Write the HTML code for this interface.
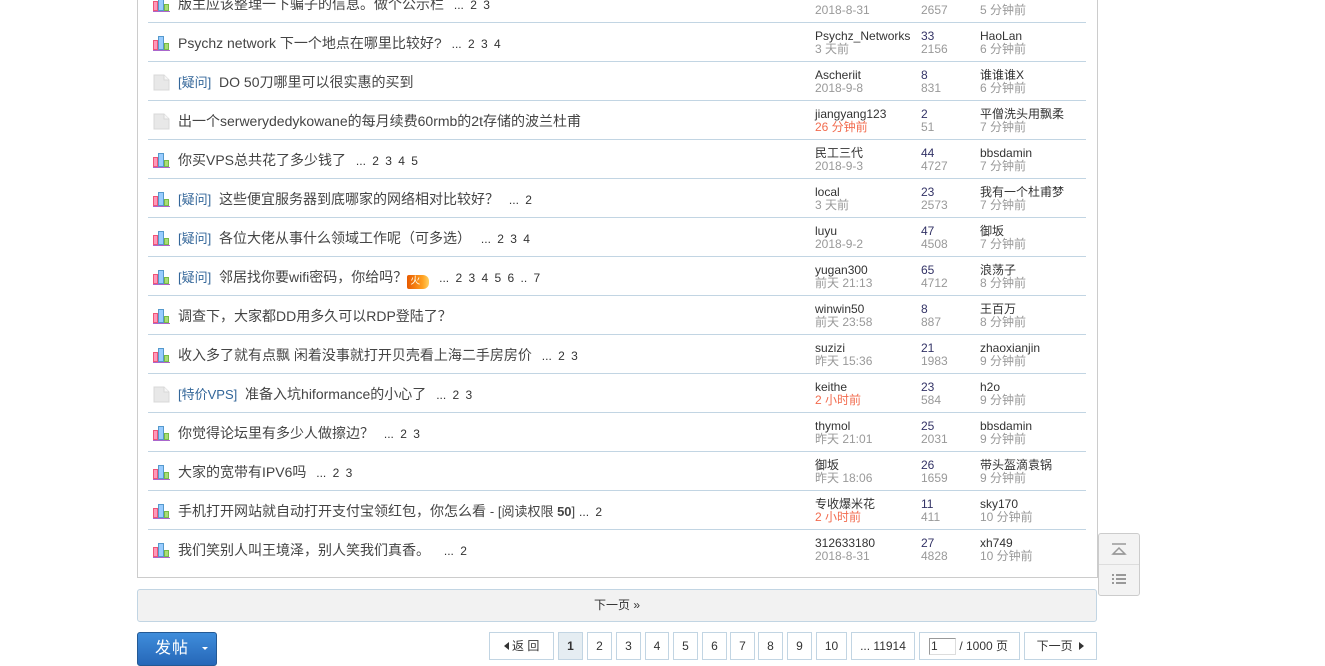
<!DOCTYPE html>
<html><head><meta charset="utf-8"><style>
*{margin:0;padding:0;box-sizing:border-box}
body{width:1325px;height:663px;background:#fff;position:relative;overflow:hidden;font-family:"Liberation Sans","Noto Sans CJK SC",sans-serif;color:#333;font-size:12px}
.box{position:absolute;left:137px;top:-2px;width:961px;height:580px;border:1px solid #ccc;border-top:none}
.row{position:absolute;left:148px;width:938px;height:39px;border-bottom:1px solid #c2d5e3}
.ic{position:absolute;left:5px;top:13px;width:17px;height:15px}
.t{position:absolute;left:30px;top:11px;font-size:14px;white-space:nowrap;line-height:18px;color:#444}
.t .tag{color:#369;font-size:13px}
.t .pg{font-size:12px;color:#333;margin-left:6px;word-spacing:3px}
.a{position:absolute;left:667px;top:7px;line-height:13px;white-space:nowrap}
.n{position:absolute;left:773px;top:7px;line-height:13px;color:#336}
.l{position:absolute;left:832px;top:7px;line-height:13px;white-space:nowrap}
.g{color:#999}.r{color:#f26c4f}
.fire{display:inline-block;width:22px;height:14px;background:linear-gradient(90deg,#e85a00,#ffa020 70%,#ffd060);border-radius:2px 6px 6px 2px;color:#ffe;font-size:10px;line-height:14px;vertical-align:-2px;padding-left:3px}
.next{position:absolute;left:137px;top:589px;width:960px;height:33px;background:#f2f2f2;border:1px solid #c2d5e3;border-radius:3px;text-align:center;line-height:31px;font-size:12px}
.post{position:absolute;left:137px;top:632px;width:80px;height:34px;background:linear-gradient(#3f8ddb,#2667b8);border:1px solid #235994;border-radius:3px;color:#fff;font-size:16px;line-height:31px;padding-left:17px;letter-spacing:1px}
.pgb{position:absolute;top:632px;height:28px;border:1px solid #c2d5e3;background:#fff;line-height:26px;text-align:center;font-size:12px;color:#333}
.side{position:absolute;left:1098px;top:533px;width:42px;height:63px;border:1px solid #ccc;border-radius:3px;background:#f3f3f3}
.tri{display:inline-block;width:0;height:0;border-top:4px solid transparent;border-bottom:4px solid transparent;vertical-align:0}
</style></head><body>
<div class="box"></div>

<div class="row" style="top:-16px"><svg class="ic" viewBox="0 0 17 15"><rect x="0.5" y="4.5" width="4" height="9" fill="#f9b" stroke="#e57"/><rect x="5.5" y="0.5" width="5" height="13" fill="#9cf" stroke="#59c"/><rect x="11.5" y="7.5" width="4" height="6" fill="#ad7" stroke="#7b4"/><rect x="0" y="14" width="17" height="1" fill="#a6c"/></svg><div class="t">版主应该整理一下骗子的信息。做个公示栏 <span class="pg">... 2 3</span></div><div class="a">&nbsp;<br><span class="g">2018-8-31</span></div><div class="n">&nbsp;<br><span class="g">2657</span></div><div class="l">&nbsp;<br><span class="g">5 分钟前</span></div></div>

<div class="row" style="top:23px"><svg class="ic" viewBox="0 0 17 15"><rect x="0.5" y="4.5" width="4" height="9" fill="#f9b" stroke="#e57"/><rect x="5.5" y="0.5" width="5" height="13" fill="#9cf" stroke="#59c"/><rect x="11.5" y="7.5" width="4" height="6" fill="#ad7" stroke="#7b4"/><rect x="0" y="14" width="17" height="1" fill="#a6c"/></svg><div class="t">Psychz network 下一个地点在哪里比较好? <span class="pg">... 2 3 4</span></div><div class="a">Psychz_Networks<br><span class="g">3 天前</span></div><div class="n">33<br><span class="g">2156</span></div><div class="l">HaoLan<br><span class="g">6 分钟前</span></div></div>

<div class="row" style="top:62px"><svg class="ic" viewBox="0 0 17 17" style="height:17px;top:12px"><path d="M1 1h10l5 5v10H1z" fill="#e8e8e8" stroke="#d8d8d8"/><path d="M11 1v5h5" fill="#f6f6f6" stroke="#d8d8d8"/></svg><div class="t"><span class="tag">[疑问]</span>&nbsp; DO 50刀哪里可以很实惠的买到</div><div class="a">Ascheriit<br><span class="g">2018-9-8</span></div><div class="n">8<br><span class="g">831</span></div><div class="l">谁谁谁X<br><span class="g">6 分钟前</span></div></div>

<div class="row" style="top:101px"><svg class="ic" viewBox="0 0 17 17" style="height:17px;top:12px"><path d="M1 1h10l5 5v10H1z" fill="#e8e8e8" stroke="#d8d8d8"/><path d="M11 1v5h5" fill="#f6f6f6" stroke="#d8d8d8"/></svg><div class="t">出一个serwerydedykowane的每月续费60rmb的2t存储的波兰杜甫</div><div class="a">jiangyang123<br><span class="r">26 分钟前</span></div><div class="n">2<br><span class="g">51</span></div><div class="l">平僧洗头用飘柔<br><span class="g">7 分钟前</span></div></div>

<div class="row" style="top:140px"><svg class="ic" viewBox="0 0 17 15"><rect x="0.5" y="4.5" width="4" height="9" fill="#f9b" stroke="#e57"/><rect x="5.5" y="0.5" width="5" height="13" fill="#9cf" stroke="#59c"/><rect x="11.5" y="7.5" width="4" height="6" fill="#ad7" stroke="#7b4"/><rect x="0" y="14" width="17" height="1" fill="#a6c"/></svg><div class="t">你买VPS总共花了多少钱了 <span class="pg">... 2 3 4 5</span></div><div class="a">民工三代<br><span class="g">2018-9-3</span></div><div class="n">44<br><span class="g">4727</span></div><div class="l">bbsdamin<br><span class="g">7 分钟前</span></div></div>

<div class="row" style="top:179px"><svg class="ic" viewBox="0 0 17 15"><rect x="0.5" y="4.5" width="4" height="9" fill="#f9b" stroke="#e57"/><rect x="5.5" y="0.5" width="5" height="13" fill="#9cf" stroke="#59c"/><rect x="11.5" y="7.5" width="4" height="6" fill="#ad7" stroke="#7b4"/><rect x="0" y="14" width="17" height="1" fill="#a6c"/></svg><div class="t"><span class="tag">[疑问]</span>&nbsp; 这些便宜服务器到底哪家的网络相对比较好？ <span class="pg">... 2</span></div><div class="a">local<br><span class="g">3 天前</span></div><div class="n">23<br><span class="g">2573</span></div><div class="l">我有一个杜甫梦<br><span class="g">7 分钟前</span></div></div>

<div class="row" style="top:218px"><svg class="ic" viewBox="0 0 17 15"><rect x="0.5" y="4.5" width="4" height="9" fill="#f9b" stroke="#e57"/><rect x="5.5" y="0.5" width="5" height="13" fill="#9cf" stroke="#59c"/><rect x="11.5" y="7.5" width="4" height="6" fill="#ad7" stroke="#7b4"/><rect x="0" y="14" width="17" height="1" fill="#a6c"/></svg><div class="t"><span class="tag">[疑问]</span>&nbsp; 各位大佬从事什么领域工作呢（可多选） <span class="pg">... 2 3 4</span></div><div class="a">luyu<br><span class="g">2018-9-2</span></div><div class="n">47<br><span class="g">4508</span></div><div class="l">御坂<br><span class="g">7 分钟前</span></div></div>

<div class="row" style="top:257px"><svg class="ic" viewBox="0 0 17 15"><rect x="0.5" y="4.5" width="4" height="9" fill="#f9b" stroke="#e57"/><rect x="5.5" y="0.5" width="5" height="13" fill="#9cf" stroke="#59c"/><rect x="11.5" y="7.5" width="4" height="6" fill="#ad7" stroke="#7b4"/><rect x="0" y="14" width="17" height="1" fill="#a6c"/></svg><div class="t"><span class="tag">[疑问]</span>&nbsp; 邻居找你要wifi密码，你给吗？<span class="fire">火</span> <span class="pg">... 2 3 4 5 6 .. 7</span></div><div class="a">yugan300<br><span class="g">前天 21:13</span></div><div class="n">65<br><span class="g">4712</span></div><div class="l">浪荡子<br><span class="g">8 分钟前</span></div></div>

<div class="row" style="top:296px"><svg class="ic" viewBox="0 0 17 15"><rect x="0.5" y="4.5" width="4" height="9" fill="#f9b" stroke="#e57"/><rect x="5.5" y="0.5" width="5" height="13" fill="#9cf" stroke="#59c"/><rect x="11.5" y="7.5" width="4" height="6" fill="#ad7" stroke="#7b4"/><rect x="0" y="14" width="17" height="1" fill="#a6c"/></svg><div class="t">调查下，大家都DD用多久可以RDP登陆了？</div><div class="a">winwin50<br><span class="g">前天 23:58</span></div><div class="n">8<br><span class="g">887</span></div><div class="l">王百万<br><span class="g">8 分钟前</span></div></div>

<div class="row" style="top:335px"><svg class="ic" viewBox="0 0 17 15"><rect x="0.5" y="4.5" width="4" height="9" fill="#f9b" stroke="#e57"/><rect x="5.5" y="0.5" width="5" height="13" fill="#9cf" stroke="#59c"/><rect x="11.5" y="7.5" width="4" height="6" fill="#ad7" stroke="#7b4"/><rect x="0" y="14" width="17" height="1" fill="#a6c"/></svg><div class="t">收入多了就有点飘 闲着没事就打开贝壳看上海二手房房价 <span class="pg">... 2 3</span></div><div class="a">suzizi<br><span class="g">昨天 15:36</span></div><div class="n">21<br><span class="g">1983</span></div><div class="l">zhaoxianjin<br><span class="g">9 分钟前</span></div></div>

<div class="row" style="top:374px"><svg class="ic" viewBox="0 0 17 17" style="height:17px;top:12px"><path d="M1 1h10l5 5v10H1z" fill="#e8e8e8" stroke="#d8d8d8"/><path d="M11 1v5h5" fill="#f6f6f6" stroke="#d8d8d8"/></svg><div class="t"><span class="tag">[特价VPS]</span>&nbsp; 准备入坑hiformance的小心了 <span class="pg">... 2 3</span></div><div class="a">keithe<br><span class="r">2 小时前</span></div><div class="n">23<br><span class="g">584</span></div><div class="l">h2o<br><span class="g">9 分钟前</span></div></div>

<div class="row" style="top:413px"><svg class="ic" viewBox="0 0 17 15"><rect x="0.5" y="4.5" width="4" height="9" fill="#f9b" stroke="#e57"/><rect x="5.5" y="0.5" width="5" height="13" fill="#9cf" stroke="#59c"/><rect x="11.5" y="7.5" width="4" height="6" fill="#ad7" stroke="#7b4"/><rect x="0" y="14" width="17" height="1" fill="#a6c"/></svg><div class="t">你觉得论坛里有多少人做擦边？ <span class="pg">... 2 3</span></div><div class="a">thymol<br><span class="g">昨天 21:01</span></div><div class="n">25<br><span class="g">2031</span></div><div class="l">bbsdamin<br><span class="g">9 分钟前</span></div></div>

<div class="row" style="top:452px"><svg class="ic" viewBox="0 0 17 15"><rect x="0.5" y="4.5" width="4" height="9" fill="#f9b" stroke="#e57"/><rect x="5.5" y="0.5" width="5" height="13" fill="#9cf" stroke="#59c"/><rect x="11.5" y="7.5" width="4" height="6" fill="#ad7" stroke="#7b4"/><rect x="0" y="14" width="17" height="1" fill="#a6c"/></svg><div class="t">大家的宽带有IPV6吗 <span class="pg">... 2 3</span></div><div class="a">御坂<br><span class="g">昨天 18:06</span></div><div class="n">26<br><span class="g">1659</span></div><div class="l">带头盔滴袁锅<br><span class="g">9 分钟前</span></div></div>

<div class="row" style="top:491px"><svg class="ic" viewBox="0 0 17 15"><rect x="0.5" y="4.5" width="4" height="9" fill="#f9b" stroke="#e57"/><rect x="5.5" y="0.5" width="5" height="13" fill="#9cf" stroke="#59c"/><rect x="11.5" y="7.5" width="4" height="6" fill="#ad7" stroke="#7b4"/><rect x="0" y="14" width="17" height="1" fill="#a6c"/></svg><div class="t">手机打开网站就自动打开支付宝领红包，你怎么看 <span style="font-size:13px">- [阅读权限 <b>50</b>]</span> <span class="pg" style="margin-left:0">... 2</span></div><div class="a">专收爆米花<br><span class="r">2 小时前</span></div><div class="n">11<br><span class="g">411</span></div><div class="l">sky170<br><span class="g">10 分钟前</span></div></div>

<div class="row" style="top:530px;border-bottom:none"><svg class="ic" viewBox="0 0 17 15"><rect x="0.5" y="4.5" width="4" height="9" fill="#f9b" stroke="#e57"/><rect x="5.5" y="0.5" width="5" height="13" fill="#9cf" stroke="#59c"/><rect x="11.5" y="7.5" width="4" height="6" fill="#ad7" stroke="#7b4"/><rect x="0" y="14" width="17" height="1" fill="#a6c"/></svg><div class="t">我们笑别人叫王境泽，别人笑我们真香。 <span class="pg" style="margin-left:10px">... 2</span></div><div class="a">312633180<br><span class="g">2018-8-31</span></div><div class="n">27<br><span class="g">4828</span></div><div class="l">xh749<br><span class="g">10 分钟前</span></div></div>

<div class="side"><div style="height:31px;border-bottom:1px solid #ddd;position:relative"><svg width="40" height="31" viewBox="0 0 40 31"><path d="M13 10h14" stroke="#999" stroke-width="1.5"/><path d="M14 20l6-6 6 6z" fill="none" stroke="#999" stroke-width="1.5"/><path d="M14 20h12" stroke="#999" stroke-width="1.5"/></svg></div><svg width="40" height="30" viewBox="0 0 40 30"><g fill="#999"><rect x="13" y="9" width="2" height="2"/><rect x="17" y="9" width="10" height="2"/><rect x="13" y="13" width="2" height="2"/><rect x="17" y="13" width="10" height="2"/><rect x="13" y="17" width="2" height="2"/><rect x="17" y="17" width="10" height="2"/></g></svg></div>

<div class="next">下一页 »</div>
<div class="post">发帖 <span style="display:inline-block;margin-left:8px;width:0;height:0;border-left:3px solid transparent;border-right:3px solid transparent;border-top:3px solid #fff;vertical-align:3px"></span></div>

<div class="pgb" style="left:489px;width:65px"><span class="tri" style="border-right:5px solid #333"></span> 返 回</div>
<div class="pgb" style="left:558px;width:25px;background:#e5edf2;font-weight:bold">1</div>
<div class="pgb" style="left:587px;width:25px">2</div>
<div class="pgb" style="left:616px;width:25px">3</div>
<div class="pgb" style="left:645px;width:24px">4</div>
<div class="pgb" style="left:673px;width:25px">5</div>
<div class="pgb" style="left:702px;width:25px">6</div>
<div class="pgb" style="left:730px;width:25px">7</div>
<div class="pgb" style="left:758px;width:25px">8</div>
<div class="pgb" style="left:787px;width:25px">9</div>
<div class="pgb" style="left:816px;width:31px">10</div>
<div class="pgb" style="left:851px;width:64px">... 11914</div>
<div class="pgb" style="left:919px;width:101px;text-align:left;padding-left:9px"><span style="display:inline-block;width:27px;height:17px;border:1px solid #999;border-right-color:#ddd;border-bottom-color:#ddd;vertical-align:middle;line-height:15px;padding-left:1px">1</span> / 1000 页</div>
<div class="pgb" style="left:1024px;width:73px">下一页 &nbsp;<span class="tri" style="border-left:5px solid #333"></span></div>
</body></html>
